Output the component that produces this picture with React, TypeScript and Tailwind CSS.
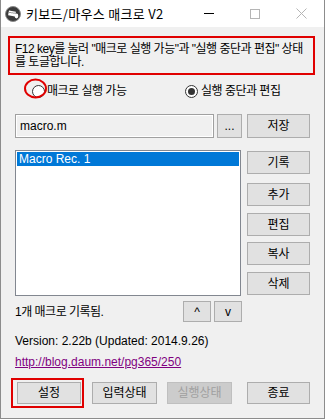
import React from "react";

const F = "font-['Liberation_Sans','Noto_Sans_CJK_KR',sans-serif]";

function Btn({ children, w, h = "h-[23px]", disabled = false, cls = "" }: { children: React.ReactNode; w: string; h?: string; disabled?: boolean; cls?: string }) {
  return (
    <div
      className={`${w} ${h} ${cls} flex items-center justify-center border text-[12px] leading-none ${
        disabled ? "bg-[#cccccc] border-[#bfbfbf] text-[#a0a0a0]" : "bg-[#e1e1e1] border-[#adadad] text-black"
      }`}
    >
      {children}
    </div>
  );
}

function Radio({ checked }: { checked: boolean }) {
  return (
    <div className="w-[13px] h-[13px] rounded-full border border-[#333333] bg-white flex items-center justify-center shrink-0">
      {checked && <div className="w-[7px] h-[7px] rounded-full bg-[#333333]" />}
    </div>
  );
}

export default function App() {
  return (
    <div className={`w-[325px] h-[419px] bg-[#f0f0f0] border-x border-b border-[#8c8c8c] ${F} text-black relative overflow-hidden`}>
      {/* Title bar */}
      <div className="h-[27px] bg-white flex items-center relative">
        <svg className="ml-[4px]" width="16" height="16" viewBox="0 0 16 16">
          <circle cx="8" cy="8" r="7.5" fill="#3b3b3b" stroke="#8a8a8a" strokeWidth="1" />
          <rect x="3.5" y="5" width="7" height="5" fill="#ffffff" transform="rotate(10 7 7.5)" />
          <rect x="4.5" y="6" width="1" height="1" fill="#3b3b3b" />
          <rect x="6.5" y="6.3" width="1" height="1" fill="#3b3b3b" />
          <rect x="8.5" y="6.6" width="1" height="1" fill="#3b3b3b" />
          <ellipse cx="11.5" cy="10" rx="1.8" ry="2.4" fill="#ffffff" />
        </svg>
        <span className="ml-[5px] text-[13px] tracking-[0.3px] font-['Noto_Sans_CJK_KR',sans-serif] leading-none">키보드/마우스 매크로 V2</span>
        <div className="absolute right-0 top-0 h-[27px] flex">
          <div className="w-[46px] h-[27px] flex items-center justify-center">
            <div className="w-[10px] h-[1px] bg-black" />
          </div>
          <div className="w-[46px] h-[27px] flex items-center justify-center">
            <div className="w-[10px] h-[10px] border border-[#b5b5b5]" />
          </div>
          <div className="w-[46px] h-[27px] flex items-center justify-center">
            <svg width="11" height="11" viewBox="0 0 11 11">
              <path d="M0.5 0.5 L10.5 10.5 M10.5 0.5 L0.5 10.5" stroke="#b5b5b5" strokeWidth="1" />
            </svg>
          </div>
        </div>
      </div>

      {/* Body */}
      <div className="pl-[7px] flex flex-col relative">
        <div className="mt-[9px] w-[307px] h-[39px] border-2 border-[#e00000] pl-[5px] pt-[5px] text-[12px] leading-[13px] whitespace-nowrap tracking-[-0.5px]">
          F12 key를 눌러 "매크로 실행 가능"과 "실행 중단과 편집" 상태
          <br />를 토글합니다.
        </div>

        {/* Radios */}
        <div className="mt-[9px] h-[14px] flex items-center text-[12px] tracking-[-0.5px] relative">
          <div className="w-[177px] flex items-center">
            <div className="ml-[24px]">
              <Radio checked={false} />
            </div>
            <span className="ml-[2px]">매크로 실행 가능</span>
          </div>
          <Radio checked={true} />
          <span className="ml-[3px]">실행 중단과 편집</span>
          <svg className="absolute left-[16px] top-[-6px]" width="24" height="22" viewBox="0 0 24 22">
            <ellipse cx="11.5" cy="10.5" rx="10.5" ry="9" fill="none" stroke="#e00000" strokeWidth="2" />
          </svg>
        </div>

        {/* File row */}
        <div className="mt-[16px] ml-[7px] flex items-center">
          <div className="w-[199px] h-[24px] border border-[#a0a0a0] bg-[#f0f0f0] flex items-center pl-[4px] text-[12px] shadow-[inset_0_0_0_1px_#ffffff]">
            macro.m
          </div>
          <Btn w="w-[25px]" h="h-[24px]" cls="ml-[3px]">...</Btn>
          <Btn w="w-[63px]" h="h-[24px]" cls="ml-[5px]">저장</Btn>
        </div>

        {/* List area */}
        <div className="mt-[12px] ml-[7px] flex">
          <div className="w-[226px] h-[146px] border border-[#828790] bg-white p-[1px]">
            <div className="h-[14px] bg-[#0078d7] text-white text-[12px] leading-[14px] pl-[2px]">Macro Rec. 1</div>
          </div>
          <div className="ml-[6px] mt-[1px] flex flex-col">
            <Btn w="w-[63px]">기록</Btn>
            <Btn w="w-[63px]" cls="mt-[9px]">추가</Btn>
            <Btn w="w-[63px]" cls="mt-[7px]">편집</Btn>
            <Btn w="w-[63px]" cls="mt-[6px]">복사</Btn>
            <Btn w="w-[63px]" cls="mt-[7px]">삭제</Btn>
          </div>
        </div>

        {/* Status row */}
        <div className="mt-[5px] ml-[7px] flex items-center w-[227px]">
          <span className="flex-1 text-[12px] tracking-[-0.5px]">1개 매크로 기록됨.</span>
          <Btn w="w-[28px]" h="h-[21px]">^</Btn>
          <Btn w="w-[28px]" h="h-[21px]" cls="ml-[3px]">v</Btn>
        </div>

        <div className="mt-[12px] ml-[7px] text-[12px] leading-[14px]">Version: 2.22b (Updated: 2014.9.26)</div>
        <div className="mt-[7px] ml-[7px] text-[12px] leading-[14px] text-[#800080] underline">http://blog.daum.net/pg365/250</div>

        {/* Bottom buttons */}
        <div className="mt-[13px] ml-[9px] flex relative">
          <Btn w="w-[64px]" h="h-[22px]">설정</Btn>
          <Btn w="w-[65px]" h="h-[22px]" cls="ml-[11px]">입력상태</Btn>
          <Btn w="w-[65px]" h="h-[22px]" cls="ml-[10px]" disabled>실행상태</Btn>
          <Btn w="w-[63px]" h="h-[22px]" cls="ml-[15px]">종료</Btn>
          <div className="absolute left-[-6px] top-[-4px] w-[73px] h-[30px] border-2 border-[#e00000]" />
        </div>
      </div>
    </div>
  );
}
